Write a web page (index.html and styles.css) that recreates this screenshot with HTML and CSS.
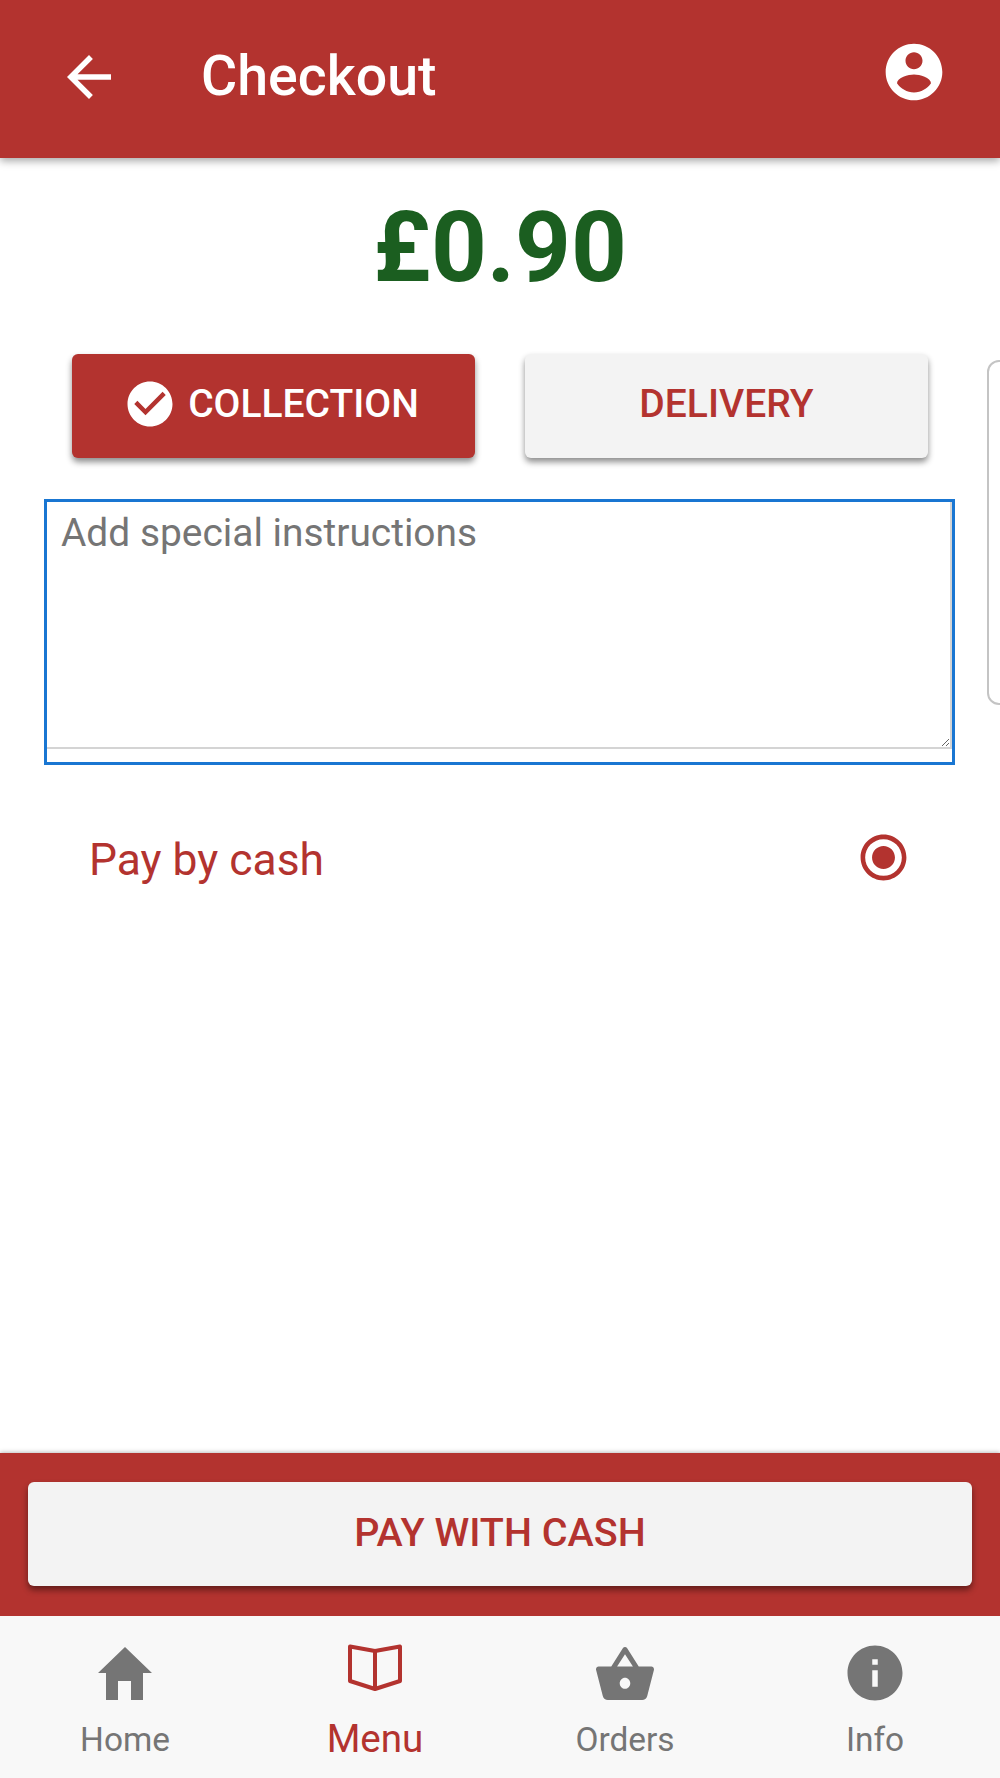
FILE: index.html
```html
<!DOCTYPE html>
<html lang="en">
<head>
    <meta charset="UTF-8">
    <meta name="viewport" content="width=device-width, initial-scale=1.0">
    <title>Checkout</title>
    <link rel="stylesheet" href="styles.css">
</head>
<body>
    <div class="app">
        <header class="app-bar">
            <svg class="back-icon" viewBox="0 0 24 24"><path d="M20 11H7.83l5.59-5.59L12 4l-8 8 8 8 1.41-1.41L7.83 13H20v-2z"/></svg>
            <h1 class="title">Checkout</h1>
            <svg class="account-icon" viewBox="0 0 24 24"><path d="M12 2C6.48 2 2 6.48 2 12s4.48 10 10 10 10-4.48 10-10S17.52 2 12 2zm0 3c1.66 0 3 1.34 3 3s-1.34 3-3 3-3-1.34-3-3 1.34-3 3-3zm0 14.2c-2.5 0-4.71-1.28-6-3.22.03-1.99 4-3.08 6-3.08 1.99 0 5.97 1.09 6 3.08-1.29 1.94-3.5 3.22-6 3.22z"/></svg>
        </header>

        <main class="content">
            <div class="total">£0.90</div>

            <div class="order-types">
                <button class="btn btn-active">
                    <svg class="check-icon" viewBox="0 0 24 24"><path d="M12 2C6.48 2 2 6.48 2 12s4.48 10 10 10 10-4.48 10-10S17.52 2 12 2zm-2 15-5-5 1.41-1.41L10 14.17l7.59-7.59L19 8l-9 9z"/></svg>
                    COLLECTION
                </button>
                <button class="btn">DELIVERY</button>
            </div>
            <div class="next-card"></div>

            <div class="notes">
                <textarea class="notes-input" placeholder="Add special instructions"></textarea>
            </div>

            <div class="pay-option">
                <span class="pay-label">Pay by cash</span>
                <svg class="radio-icon" viewBox="0 0 24 24"><path d="M12 7c-2.76 0-5 2.24-5 5s2.24 5 5 5 5-2.24 5-5-2.24-5-5-5zm0-5C6.48 2 2 6.48 2 12s4.48 10 10 10 10-4.48 10-10S17.52 2 12 2zm0 18c-4.42 0-8-3.58-8-8s3.58-8 8-8 8 3.58 8 8-3.58 8-8 8z"/></svg>
            </div>
        </main>

        <div class="pay-bar">
            <button class="btn btn-wide">PAY WITH CASH</button>
        </div>

        <nav class="tabs">
            <div class="tab">
                <div class="tab-icon">
                    <svg class="home-icon" viewBox="0 0 54 53"><path d="M27 0 54 26H45V53H33V34H20V53H8V26H0z"/></svg>
                </div>
                <span class="tab-label">Home</span>
            </div>
            <div class="tab tab-active">
                <div class="tab-icon">
                    <svg class="book-icon" viewBox="0 0 54 48"><path d="M2 3.5 27 8 52 3.5V38L27 46 2 38z M27 8V46"/></svg>
                </div>
                <span class="tab-label">Menu</span>
            </div>
            <div class="tab">
                <div class="tab-icon">
                    <svg class="basket-icon" viewBox="1 2 22 19" preserveAspectRatio="none"><path d="M17.21 9l-4.38-6.56c-.19-.28-.51-.42-.83-.42-.32 0-.64.14-.83.43L6.79 9H2c-.55 0-1 .45-1 1 0 .09.01.18.04.27l2.54 9.27c.23.84 1 1.46 1.92 1.46h13c.92 0 1.69-.62 1.93-1.46l2.54-9.27L23 10c0-.55-.45-1-1-1h-4.79zM9 9l3-4.4L15 9H9zm3 8c-1.1 0-2-.9-2-2s.9-2 2-2 2 .9 2 2-.9 2-2 2z"/></svg>
                </div>
                <span class="tab-label">Orders</span>
            </div>
            <div class="tab">
                <div class="tab-icon">
                    <svg class="info-icon" viewBox="0 0 24 24"><path d="M12 2C6.48 2 2 6.48 2 12s4.48 10 10 10 10-4.48 10-10S17.52 2 12 2zm1 15h-2v-6h2v6zm0-8h-2V7h2v2z"/></svg>
                </div>
                <span class="tab-label">Info</span>
            </div>
        </nav>
    </div>
</body>
</html>
```

FILE: styles.css
```css
* {
    box-sizing: border-box;
}
body {
    margin: 0;
    font-family: Roboto, sans-serif;
    background: #fff;
}
.app {
    display: flex;
    flex-direction: column;
    height: 1778px;
    overflow: hidden;
}
.app-bar {
    display: flex;
    align-items: center;
    height: 158px;
    padding: 0 52px 5px 56px;
    background: #b3332f;
    color: #fff;
    box-shadow: 0 3px 8px rgba(0, 0, 0, 0.35);
    position: relative;
    z-index: 1;
}
.back-icon {
    width: 66px;
    height: 66px;
    fill: #fff;
}
.title {
    flex: 1;
    margin: 0 0 0 79px;
    font-size: 55.5px;
    font-weight: 500;
}
.account-icon {
    width: 68px;
    height: 68px;
    margin-bottom: 10px;
    fill: #fff;
}
.content {
    flex: 1;
    position: relative;
}
.total {
    margin-top: 34px;
    height: 112px;
    line-height: 112px;
    text-align: center;
    font-size: 97.5px;
    font-weight: 700;
    color: #1b5e20;
}
.order-types {
    display: flex;
    gap: 50px;
    margin: 50px 0 0 72px;
}
.btn {
    display: flex;
    align-items: center;
    justify-content: center;
    width: 403px;
    height: 104px;
    padding: 0 0 4px;
    border: 0;
    border-radius: 6px;
    background: #f3f3f3;
    color: #b3332f;
    font-family: Roboto, sans-serif;
    font-size: 39px;
    font-weight: 500;
    box-shadow: 0 4px 6px rgba(0, 0, 0, 0.45);
}
.btn-active {
    padding-right: 5px;
    background: #b3332f;
    color: #fff;
}
.check-icon {
    width: 54px;
    height: 54px;
    margin-right: 11px;
    fill: #fff;
}
.btn-wide {
    width: 100%;
    font-size: 39.5px;
}
.next-card {
    position: absolute;
    top: 202px;
    left: 987px;
    width: 40px;
    height: 345px;
    border: 2px solid #c4c4c4;
    border-radius: 12px;
}
.notes {
    width: 911px;
    height: 266px;
    margin: 41px 0 0 44px;
    border: 3px solid #1976d2;
}
.notes-input {
    display: block;
    width: 100%;
    height: 247px;
    padding: 8px 14px;
    border: 0;
    border-right: 2px solid #d4d4d4;
    border-bottom: 2px solid #d4d4d4;
    outline: none;
    font-family: Roboto, sans-serif;
    font-size: 38.9px;
    color: #757575;
}
.notes-input::placeholder {
    color: #757575;
    opacity: 1;
}
.pay-option {
    display: flex;
    align-items: center;
    justify-content: space-between;
    margin: 60px 90px 0 89px;
    height: 66px;
    font-size: 44.4px;
    color: #b3332f;
}
.pay-label {
    padding-top: 4px;
}
.radio-icon {
    width: 55px;
    height: 55px;
    margin: 0 -1px 2px 0;
    fill: #b3332f;
}
.pay-bar {
    height: 163px;
    padding: 29px 28px;
    background: #b3332f;
    box-shadow: 0 -1px 4px rgba(0, 0, 0, 0.25);
}
.tabs {
    display: grid;
    grid-template-columns: repeat(4, 1fr);
    height: 162px;
    background: #f8f8f8;
}
.tab {
    display: flex;
    flex-direction: column;
    align-items: center;
    padding-top: 26px;
    color: #757575;
}
.tab-active {
    color: #b3332f;
}
.tab-icon {
    display: flex;
    align-items: center;
    justify-content: center;
    height: 62px;
}
.tab-icon svg {
    fill: #757575;
}
.tab-label {
    margin-top: 16px;
    height: 40px;
    line-height: 40px;
    font-size: 33.4px;
}
.tab-active .tab-label {
    font-size: 38.6px;
    margin-top: 15px;
}
.home-icon {
    width: 54px;
    height: 53px;
}
.tab-icon .book-icon {
    width: 54px;
    height: 48px;
    margin-bottom: 12px;
    fill: none;
    stroke: #b3332f;
    stroke-width: 4;
    stroke-linejoin: round;
}
.basket-icon {
    width: 58px;
    height: 53px;
}
.info-icon {
    width: 66px;
    height: 66px;
}
```
